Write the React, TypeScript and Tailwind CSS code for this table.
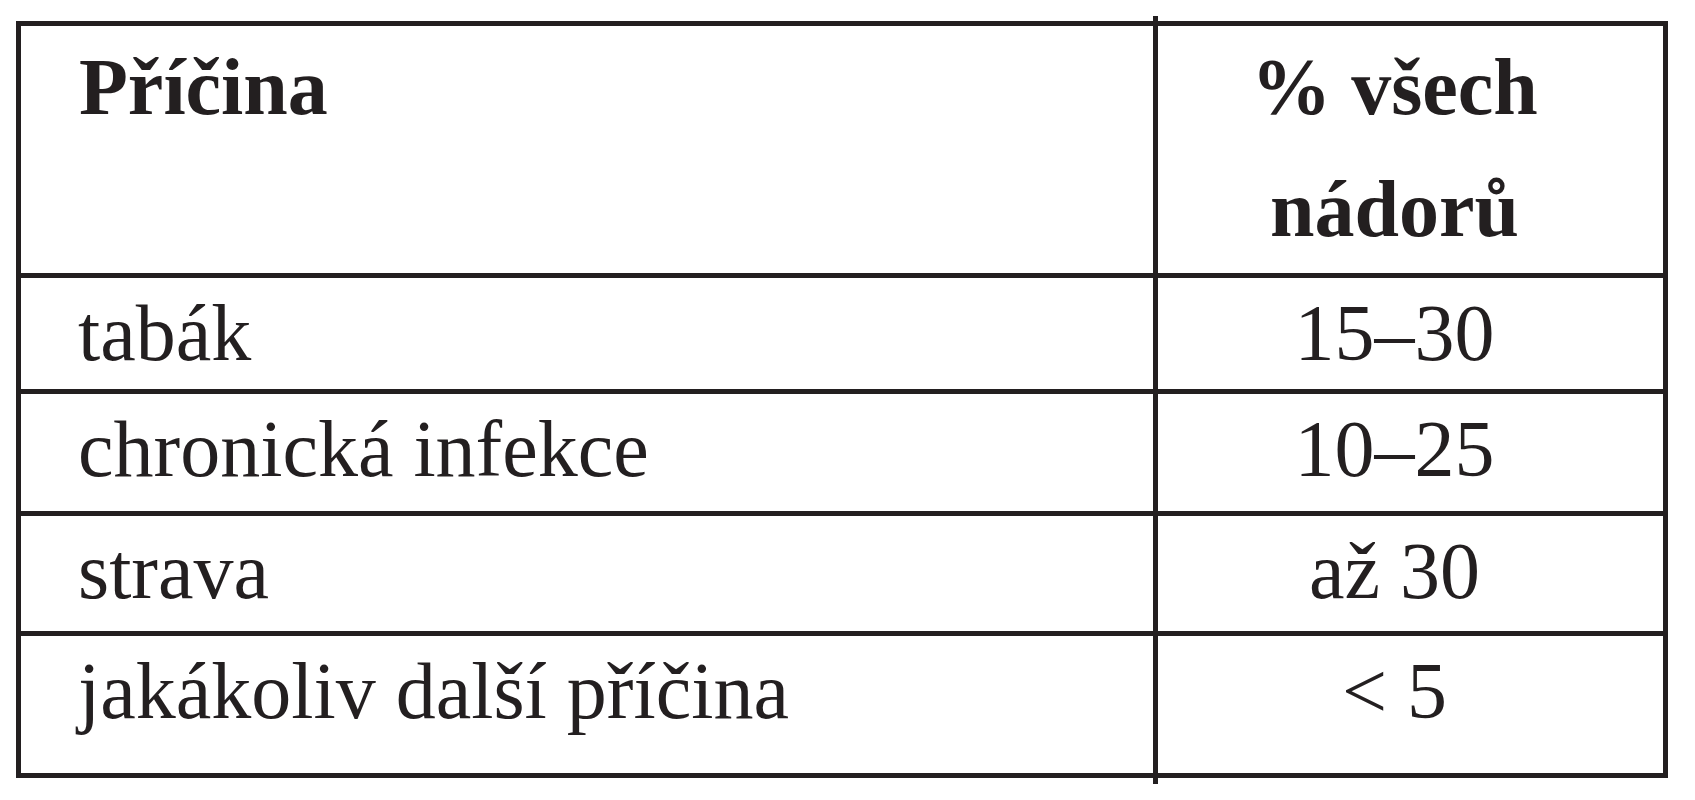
type Row = {
  cause: string;
  share: string;
  height: string;
};

const ROWS: Row[] = [
  { cause: 'tabák', share: '15–30', height: 'h-[116px]' },
  { cause: 'chronická infekce', share: '10–25', height: 'h-[122px]' },
  { cause: 'strava', share: 'až 30', height: 'h-[120px]' },
  { cause: 'jakákoliv další příčina', share: '< 5', height: 'h-[142px]' },
];

const App = () => {
  return (
    <div
      className="min-h-screen bg-white pl-[16px] pt-[21px] text-[#231f20]"
      style={{ fontFamily: '"Liberation Serif", "Times New Roman", serif' }}
    >
      <div className="relative w-[1652px] border-[5px] border-[#231f20]">
        {/* the column rule sticks out a little above and below the frame */}
        <div className="pointer-events-none absolute -top-[10px] -bottom-[11px] left-[1132px] w-[5px] bg-[#231f20]" aria-hidden />

        <div className="flex h-[247px]">
          <div className="w-[1132px] shrink-0 pl-[58px] text-[80px] font-bold leading-[122px]">Příčina</div>
          <div className="flex-1 border-l-[5px] border-[#231f20] pr-[32px] text-center text-[80px] font-bold leading-[122px]">
            <div>% všech</div>
            <div>nádorů</div>
          </div>
        </div>

        {ROWS.map((row) => (
          <div key={row.cause} className={`flex border-t-[5px] border-[#231f20] ${row.height}`}>
            <div className="w-[1132px] shrink-0 pl-[57px] text-[80px] leading-[110px]">{row.cause}</div>
            <div className="flex-1 border-l-[5px] border-[#231f20] pr-[32px] text-center text-[80px] leading-[110px]">
              {row.share}
            </div>
          </div>
        ))}
      </div>
    </div>
  );
};

export default App;
